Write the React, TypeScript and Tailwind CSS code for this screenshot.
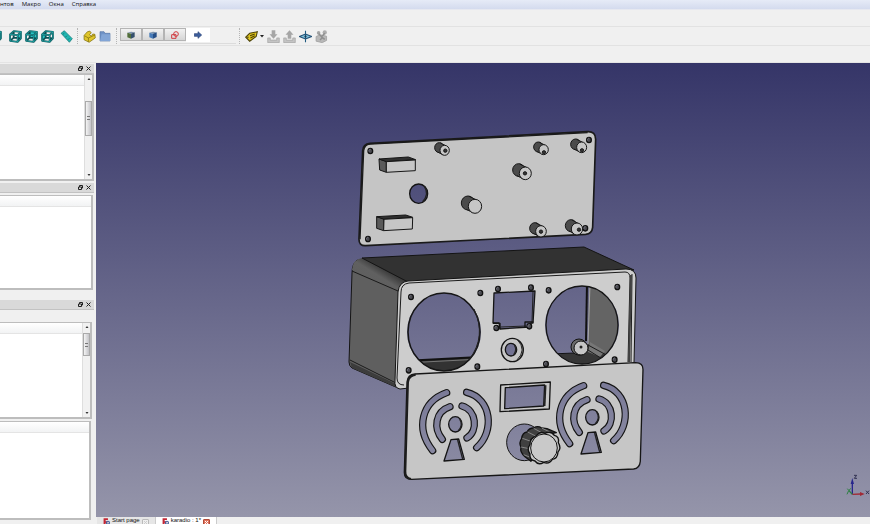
import type { ReactNode } from "react";

const menuItems = ["нтов", "Макро", "Окна", "Справка"];

/** Extruded pin on the back plate: dark side, light cap */
function Pin({ x, y, r, dx, dy, hole }: { x: number; y: number; r: number; dx: number; dy: number; hole?: [number, number] }) {
  return (
    <g stroke="#161616" strokeWidth="3">
      <ellipse cx={x - dx} cy={y - dy} rx={r} ry={r + 1} fill="#4b4b4b" />
      <path
        d={`M${x - dx + 3} ${y - dy - r} L${x + 2} ${y - r} L${x - 4} ${y + r} L${x - dx - 4} ${y - dy + r}Z`}
        fill="#4b4b4b"
        stroke="none"
      />
      <path d={`M${x - dx + 3} ${y - dy - r} L${x + 3} ${y - r} M${x - dx - 5} ${y - dy + r - 1} L${x - 6} ${y + r - 1}`} />
      <ellipse cx={x} cy={y} rx={r} ry={r + 1} fill="#c6c6c6" />
      {hole && <circle cx={hole[0]} cy={hole[1]} r="5" fill="#333" />}
    </g>
  );
}

function Screw({ x, y }: { x: number; y: number }) {
  return (
    <g>
      <ellipse cx={x} cy={y} rx="7" ry="8" fill="#4a4a50" stroke="#111" strokeWidth="4" />
      <path d={`M${x - 4} ${y + 2} A4 5 0 0 1 ${x + 1} ${y - 5}`} stroke="#8c8c9c" strokeWidth="2" fill="none" />
    </g>
  );
}

function Slot({ d }: { d: string }) {
  return (
    <g fill="none" strokeLinecap="round">
      <path d={d} stroke="#141414" strokeWidth="22" />
      <path d={d} stroke="url(#skyFront)" strokeWidth="15" />
    </g>
  );
}

function Grille() {
  return (
    <g>
      <Slot d="M155 98 C80 125 60 205 113 272" />
      <Slot d="M215 97 C290 115 300 215 245 263" />
      <Slot d="M165 140 C120 155 115 205 142 238" />
      <Slot d="M201 138 C245 150 250 213 216 234" />
      <ellipse cx="181" cy="193" rx="20" ry="23" fill="url(#skyFront)" stroke="#141414" strokeWidth="4" />
      <path d="M194 177 Q206 194 190 212" fill="none" stroke="#222" strokeWidth="4" />
      <path d="M168 239 L191 237 L208 298 L147 303Z" fill="url(#skyFront)" stroke="#141414" strokeWidth="4" />
      <path d="M188 240 L203 297" fill="none" stroke="#222" strokeWidth="4" />
    </g>
  );
}

function BackPlate() {
  return (
    <g transform="translate(345 120) scale(.3333)" strokeLinejoin="round">
      <path
        d="M75 70 L728 35 Q752 34 752 58 L743 322 Q741 341 722 343 L62 377 Q41 378 42 356 L53 92 Q54 72 75 70Z"
        fill="#c5c5c5"
        stroke="#1a1a1a"
        strokeWidth="5"
      />
      <path d="M45 358 L56 92 Q58 74 75 72 L728 38" fill="none" stroke="#1a1a1a" strokeWidth="4" />
      <Screw x={76} y={93} />
      <Screw x={732} y={60} />
      <Screw x={69} y={357} />
      <Screw x={721} y={325} />
      <g stroke="#151515" strokeWidth="3">
        <path d="M102 117 L124 124 L124 157 L104 150Z" fill="#5a5a5a" />
        <path d="M102 117 L190 111 L212 119 L124 125Z" fill="#303030" />
        <path d="M124 125 L211 120 L211 152 L124 157Z" fill="#c6c6c6" />
        <path d="M95 290 L117 297 L116 332 L95 325Z" fill="#5a5a5a" />
        <path d="M95 290 L182 285 L203 292 L117 298Z" fill="#303030" />
        <path d="M117 298 L203 293 L202 327 L116 332Z" fill="#c6c6c6" />
      </g>
      <ellipse cx="221" cy="221" rx="27" ry="29" fill="url(#skyBack)" stroke="#141414" strokeWidth="4" />
      <path d="M238 199 Q254 222 233 245" fill="none" stroke="#222" strokeWidth="4" />
      <Pin x={299} y={91} r={14} dx={16} dy={8} hole={[301, 92]} />
      <Pin x={596} y={89} r={14} dx={16} dy={8} hole={[597, 97]} />
      <Pin x={710} y={82} r={15} dx={18} dy={9} hole={[711, 91]} />
      <Pin x={541} y={160} r={18} dx={20} dy={10} hole={[540, 160]} />
      <Pin x={390} y={259} r={20} dx={21} dy={10} />
      <Pin x={588} y={334} r={16} dx={18} dy={9} hole={[588, 335]} />
      <Pin x={696} y={327} r={17} dx={18} dy={10} hole={[702, 329]} />
    </g>
  );
}

function Enclosure() {
  return (
    <g strokeLinejoin="round">
      {/* side and top walls */}
      <path d="M357 260 Q352 264 352 273 L349 362 Q349 366 352 368 L398 388 L404 290 L410 282Z" fill="#5f5f5f" stroke="#141414" />
      <path d="M352 270 Q353 259 362 258 L410 280 Q400 282 398 292Z" fill="url(#edge)" />
      <path d="M362 258 L584 247 L634 270 L408 282Z" fill="#323232" stroke="#141414" />
      <path d="M352 271 L398 291 M350 360 L396 383" stroke="#1a1a1a" fill="none" />
      <path d="M350 362 L396 384 L398 388 L352 368Z" fill="#3c3c3c" />
      {/* front frame */}
      <path
        d="M408 281 L626 269 Q636 269 636 278 L634 363 L400 389 Q394 388 395 380 L398 292 Q399 282 408 281Z"
        fill="#cdcdcd"
        stroke="#141414"
      />
      <path d="M409 283 L625 272 Q630 272 630 278 L628 362 M632 274 L631 362 M409 283 Q401 284 401 292 L397 378 Q397 385 404 385" stroke="#1c1c1c" fill="none" />
      <path d="M631 275 L629 362" stroke="#414141" strokeWidth="2" />
      {/* speaker openings */}
      <clipPath id="leftHole">
        <ellipse cx="444" cy="332" rx="36" ry="39" />
      </clipPath>
      <clipPath id="rightHole">
        <ellipse cx="582" cy="325" rx="36" ry="39" />
      </clipPath>
      <ellipse cx="444" cy="332" rx="37" ry="39" fill="url(#sky)" />
      <g clipPath="url(#leftHole)">
        <path d="M405 361 L482 357 L482 375 L405 375Z" fill="#323232" />
        <path d="M405 361 L482 357" stroke="#111" strokeWidth="2" />
        <path d="M405 363 L482 359" stroke="#777" />
      </g>
      <ellipse cx="444" cy="332" rx="36" ry="39" fill="none" stroke="#151515" strokeWidth="1.5" />
      <path d="M474 309 Q487 336 469 360" fill="none" stroke="#222" />
      <ellipse cx="582" cy="325" rx="37" ry="39" fill="url(#sky)" />
      <g clipPath="url(#rightHole)">
        <path d="M589 284 L622 284 L622 364 L588 345Z" fill="#646464" />
        <path d="M587 284 L586 341" stroke="#111" strokeWidth="2" />
        <path d="M590 284 L588 345" stroke="#a8a8a8" />
        <path d="M550 355 L574 353 L588 344 L608 356 L590 366 L560 368Z" fill="#363636" />
        <path d="M550 354 L575 353" stroke="#111" />
        <path d="M590 342 L605 351 L600 357 L588 352Z" fill="#777" />
        <path d="M588 345 L612 358 M588 350 L604 360" stroke="#1c1c1c" />
        <circle cx="579" cy="347" r="8" fill="#6b6b6b" stroke="#111" />
        <circle cx="581" cy="348" r="7" fill="#c6c6c6" stroke="#111" />
        <circle cx="581" cy="347" r="1.5" fill="#222" />
      </g>
      <ellipse cx="582" cy="325" rx="36" ry="39" fill="none" stroke="#151515" strokeWidth="1.3" />
      {/* display cut-out */}
      <path d="M494 293 L535 291 L533 323 L531 323 L530 327 L500 329 L499 323 L493 323Z" fill="url(#sky)" stroke="#141414" strokeWidth="1.3" />
      <path d="M533 292 L532 322 M501 327 L526 326" stroke="#222" fill="none" />
      <g transform="translate(480 240) scale(.3333)">
        <path d="M39 250 L60 250 L60 268 M135 262 L135 246 L160 246" fill="none" stroke="#141414" strokeWidth="4" />
        <Screw x={54} y={147} />
        <Screw x={153} y={143} />
        <Screw x={206} y={151} />
        <Screw x={412} y={141} />
        <Screw x={49} y={264} />
        <Screw x={148} y={259} />
        <Screw x={198} y={372} />
        <Screw x={404} y={359} />
        <Screw x={1} y={159} />
        <Screw x={-8} y={380} />
        <Screw x={-207} y={171} />
        <Screw x={-214} y={391} />
        <ellipse cx="97" cy="330" rx="33" ry="35" fill="#c6c6c6" stroke="#141414" strokeWidth="4" />
        <path d="M112 299 Q142 330 110 361" fill="none" stroke="#222" strokeWidth="3" />
        <ellipse cx="93" cy="329" rx="17" ry="19" fill="url(#skyBox)" stroke="#141414" strokeWidth="4" />
        <path d="M103 315 Q112 330 101 345" fill="none" stroke="#222" strokeWidth="4" />
      </g>
    </g>
  );
}

function FrontPlate() {
  return (
    <g transform="translate(395 360) scale(.3333)" strokeLinejoin="round">
      <path
        d="M60 42 L722 8 Q745 8 744 30 L736 304 Q734 325 716 327 L50 358 Q27 358 28 336 L36 66 Q38 44 60 42Z"
        fill="#c6c6c6"
        stroke="#161616"
        strokeWidth="4"
      />
      <path d="M48 357 Q30 354 31 334 L39 66 Q42 46 62 44" fill="none" stroke="#1c1c1c" strokeWidth="6" />
      <Grille />
      <g transform="translate(411 -21)">
        <Grille />
      </g>
      {/* display window */}
      <path d="M317 75 L466 66 L463 147 L315 155Z" fill="#c6c6c6" stroke="#141414" strokeWidth="4" />
      <path d="M331 83 L449 75 L446 138 L329 146Z" fill="url(#skyFront)" stroke="#141414" strokeWidth="4" />
      <path d="M452 76 L449 138" stroke="#222" strokeWidth="5" />
      {/* volume knob */}
      <ellipse cx="388" cy="247" rx="53" ry="55" fill="url(#skyFront)" stroke="#141414" strokeWidth="3" />
      <path
        d="M416 204 Q428 196 440 204 L456 206 L484 218 L462 222 L420 230 L402 262 L412 296 L408 304 L390 290 Q374 276 378 262 Q371 248 380 236 Q382 218 396 216 Q402 204 416 204Z"
        fill="#404040"
        stroke="#111"
        strokeWidth="4"
      />
      <path d="M398 216 L422 228 M416 205 L442 219 M440 204 L466 217 M382 235 L408 244 M378 261 L402 266 M386 284 L406 292" stroke="#888" strokeWidth="3" />
      <path
        d="M424 228 Q434 212 450 220 Q468 211 478 226 Q494 230 490 248 Q500 264 489 276 Q488 296 472 298 Q462 314 446 307 Q430 317 420 303 Q402 300 405 282 Q394 268 405 254 Q404 234 424 228Z"
        fill="#c6c6c6"
        stroke="#111"
        strokeWidth="4"
      />
      <ellipse cx="447" cy="264" rx="40" ry="42" fill="#c9c9c9" stroke="#111" strokeWidth="3" />
    </g>
  );
}

function AxisCross() {
  return (
    <g transform="translate(820 460) scale(.3333)">
      <path d="M97 103 L97 66" stroke="#26268c" strokeWidth="4" />
      <path d="M92 72 L97 54 L102 72Z" fill="#26268c" />
      <path d="M97 103 L122 102" stroke="#a02a35" strokeWidth="4" />
      <path d="M120 96 L134 102 L120 108Z" fill="#a02a35" />
      <path d="M97 103 L87 92" stroke="#2b8040" strokeWidth="4" />
      <path d="M102 46 L110 46 L103 55 L111 55" stroke="#303050" strokeWidth="3" fill="none" />
      <path d="M138 92 L147 102 M147 92 L138 102" stroke="#303050" strokeWidth="3" />
      <path d="M82 86 L87 92 L92 85 M86 92 L81 103" stroke="#2b8040" strokeWidth="3" fill="none" />
    </g>
  );
}

// The same background seen from each part's own coordinate system
const skies = [
  { id: "sky", y1: 63, y2: 517 },
  { id: "skyBack", y1: -171, y2: 1191 },
  { id: "skyBox", y1: -531, y2: 831 },
  { id: "skyFront", y1: -891, y2: 471 },
];

function Viewport() {
  return (
    <svg className="min-h-0 w-full flex-1" viewBox="96 63 774 454" preserveAspectRatio="xMidYMid slice" role="img" aria-label="3D">
      <defs>
        {skies.map((sky) => (
          <linearGradient key={sky.id} id={sky.id} gradientUnits="userSpaceOnUse" x1="0" y1={sky.y1} x2="0" y2={sky.y2}>
            <stop offset="0" stopColor="#353568" />
            <stop offset="1" stopColor="#9595aa" />
          </linearGradient>
        ))}
        <linearGradient id="edge" gradientUnits="userSpaceOnUse" x1="384" y1="268" x2="374" y2="284">
          <stop offset="0" stopColor="#383838" />
          <stop offset=".5" stopColor="#606060" />
          <stop offset="1" stopColor="#5f5f5f" />
        </linearGradient>
      </defs>
      <rect x="96" y="63" width="774" height="454" fill="url(#sky)" />
      <BackPlate />
      <Enclosure />
      <FrontPlate />
      <AxisCross />
    </svg>
  );
}

function ToolButton({ label, children }: { label: string; children: ReactNode }) {
  return (
    <button type="button" aria-label={label} className="flex h-4 w-4 shrink-0 items-center justify-center">
      {children}
    </button>
  );
}

function CubeIcon({ face }: { face: string }) {
  return (
    <svg className="h-[13px] w-[13px]" viewBox="0 0 36 36" strokeLinejoin="round">
      <path d={face} fill="#25c4c4" />
      <path d="M3 12 L13 3 L33 5 L33 23 L24 33 L3 30Z M3 12 L24 14 L33 5 M24 14 V33 M13 3 V21 L3 30 M13 21 L33 23" fill="none" stroke="#0c4f54" strokeWidth="5" />
      <path d="M3 12 L13 3 L33 5 L33 23 L24 33 L3 30Z M3 12 L24 14 L33 5 M24 14 V33" fill="none" stroke="#25b5b5" strokeWidth="2" />
    </svg>
  );
}

function SolidCube({ left, right }: { left: string; right: string }) {
  return (
    <svg className="h-2 w-2" viewBox="0 0 24 24">
      <path d="M1 5 L12 2 L23 4 L12 8Z" fill="#7d93ac" />
      <path d="M1 5 L12 8 V23 L1 19Z" fill={left} />
      <path d="M23 4 L12 8 V23 L23 18Z" fill={right} />
    </svg>
  );
}

function Handle() {
  return <div className="mx-[3px] h-4 w-px border-l border-dotted border-[#b5b5b5]" />;
}

function TrayIcon({ up }: { up?: boolean }) {
  return (
    <svg className="h-[13px] w-[13px]" viewBox="0 0 36 36">
      <path d="M2 22 H9 V28 H27 V22 H34 V35 H2Z" fill="#c4c4c4" stroke="#a5a5a5" strokeWidth="2" />
      <path d={up ? "M18 1 L29 13 H23 V24 H13 V13 H7Z" : "M13 1 H23 V12 H29 L18 24 L7 12 H13Z"} fill="#a6a6a6" />
    </svg>
  );
}

function Toolbar() {
  return (
    <div className="mt-4 flex h-5 shrink-0 items-center border-y border-[#e2e2e2]">
      <div className="flex w-[7px] justify-end overflow-hidden pr-1">
        <ToolButton label="Сверху">
          <CubeIcon face="M3 12 L13 3 L33 5 L24 14Z" />
        </ToolButton>
      </div>
      <ToolButton label="Справа">
        <CubeIcon face="M24 14 L33 5 V23 L24 33Z" />
      </ToolButton>
      <ToolButton label="Сзади">
        <CubeIcon face="M13 3 L33 5 V23 L13 21Z" />
      </ToolButton>
      <ToolButton label="Слева">
        <CubeIcon face="M3 12 L13 3 V21 L3 30Z" />
      </ToolButton>
      <div className="w-[3px]" />
      <ToolButton label="Измерить">
        <svg className="h-[13px] w-[13px]" viewBox="0 0 36 36">
          <path d="M3 9 L12 2 L34 24 L26 34Z" fill="#20b5b0" stroke="#0e7777" strokeWidth="2" />
          <path d="M12 9 L8 12 M19 16 L15 20 M26 23 L22 27" stroke="#0d6666" strokeWidth="2" />
        </svg>
      </ToolButton>
      <Handle />
      <ToolButton label="Деталь">
        <svg className="h-[13px] w-[13px]" viewBox="0 0 36 36" strokeLinejoin="round">
          <path d="M3 15 L12 5 L19 3 L23 8 L18 13 L23 17 L27 11 L33 12 L34 22 L17 34 L3 27Z" fill="#dfc52b" stroke="#80700c" strokeWidth="2" />
          <path d="M4 16 L15 22 L33 14 M15 22 V33" fill="none" stroke="#80700c" strokeWidth="2" />
        </svg>
      </ToolButton>
      <ToolButton label="Группа">
        <svg className="h-3 w-3" viewBox="0 0 36 36">
          <path d="M3 5 H15 L18 10 H33 V33 H3Z" fill="#6f93c8" stroke="#5576a8" strokeWidth="2" />
          <path d="M8 13 H33 V33 H3Z" fill="#82a5d6" />
        </svg>
      </ToolButton>
      <Handle />
      <div className="flex h-4 w-29 items-start border-b border-[#dcdcdc]" role="tablist">
        {[0, 1, 2, 3].map((i) => (
          <button
            key={i}
            type="button"
            role="tab"
            aria-selected={i === 3}
            aria-label={`${i + 1}`}
            className={
              i === 3
                ? "flex h-[14px] w-6 items-center justify-center bg-white"
                : "flex h-[13px] w-[22px] items-center justify-center border border-[#b4b4b4] bg-linear-to-b from-[#f2f2f2] to-[#d6d6d6]"
            }
          >
            {i === 0 && <SolidCube left="#526e3a" right="#35506c" />}
            {i === 1 && <SolidCube left="#477bb8" right="#264f87" />}
            {i === 2 && (
              <svg className="h-2 w-2" viewBox="0 0 24 24" fill="none" stroke="#d13a3f" strokeWidth="3">
                <path d="M2 11 H15 V22 H2Z" />
                <circle cx="15" cy="9" r="7" />
              </svg>
            )}
            {i === 3 && (
              <svg className="h-2 w-2" viewBox="0 0 24 24">
                <path d="M1 8 H12 V2 L23 12 L12 22 V16 H1Z" fill="#3d5f9d" stroke="#263f74" strokeWidth="2" />
              </svg>
            )}
          </button>
        ))}
      </div>
      <Handle />
      <ToolButton label="Метка">
        <svg className="h-[13px] w-[13px]" viewBox="0 0 36 36">
          <path d="M2 20 L13 9 L34 5 L31 18 L13 31Z" fill="#e0c51c" stroke="#4c4208" strokeWidth="3" />
          <path d="M14 16 L27 11 M15 22 L27 16" stroke="#4c4208" strokeWidth="3" />
          <circle cx="8" cy="20" r="2" fill="#333" />
        </svg>
      </ToolButton>
      <svg className="mx-px h-1 w-1" viewBox="0 0 8 8">
        <path d="M0 2 H8 L4 7Z" fill="#222" />
      </svg>
      <ToolButton label="Импорт">
        <TrayIcon />
      </ToolButton>
      <ToolButton label="Экспорт">
        <TrayIcon up />
      </ToolButton>
      <ToolButton label="Плоскость">
        <svg className="h-[13px] w-[13px]" viewBox="0 0 36 36">
          <path d="M1 18 L18 11 L35 18 L18 25Z" fill="#7fc3dd" stroke="#244f74" strokeWidth="3" />
          <path d="M18 2 V34" stroke="#1f5b80" strokeWidth="3" />
          <circle cx="18" cy="18" r="3" fill="#1c3450" />
        </svg>
      </ToolButton>
      <ToolButton label="Сборка">
        <svg className="h-[13px] w-[13px]" viewBox="0 0 36 36">
          <path d="M3 18 L14 13 L32 17 V29 L20 35 L3 31Z" fill="#b8b8b8" stroke="#9c9c9c" strokeWidth="2" />
          <circle cx="10" cy="8" r="5" fill="#a5a5a5" />
          <circle cx="27" cy="7" r="6" fill="#adadad" />
          <path d="M10 10 L20 21 M27 9 L17 20 M14 28 L20 21 L27 26" stroke="#8f8f8f" strokeWidth="4" fill="none" />
        </svg>
      </ToolButton>
    </div>
  );
}

function DockTitle() {
  return (
    <div className="flex h-[10px] w-[94px] shrink-0 items-center justify-end gap-[3px] border-b border-[#c2c2c2] bg-[#d9d9d9] pr-[3px]">
      <button type="button" aria-label="Открепить" className="flex">
        <svg className="h-[5px] w-[5px]" viewBox="0 0 10 10" fill="none" stroke="#222" strokeWidth="2">
          <path d="M3 4 V1 H9 V6 H7 M1 4 H7 V9 H1Z" />
        </svg>
      </button>
      <button type="button" aria-label="Закрыть" className="flex">
        <svg className="h-[5px] w-[5px]" viewBox="0 0 10 10" stroke="#222" strokeWidth="2">
          <path d="M1 1 L9 9 M9 1 L1 9" />
        </svg>
      </button>
    </div>
  );
}

function ScrollBar({ thumb }: { thumb: string }) {
  return (
    <div className="relative flex w-2 shrink-0 flex-col items-center justify-between border-l border-[#dedede] bg-[#f1f1f1] py-0.5">
      <svg className="h-1 w-1" viewBox="0 0 8 8">
        <path d="M1 6 L4 2 L7 6Z" fill="#333" />
      </svg>
      <div className={`absolute inset-x-0 flex items-center justify-center border border-[#aaa] bg-linear-to-r from-[#f4f4f4] to-[#c4c4c8] ${thumb}`}>
        <div className="h-1 w-[3px] border-y border-[#777]" />
      </div>
      <svg className="h-1 w-1" viewBox="0 0 8 8">
        <path d="M1 2 L4 6 L7 2Z" fill="#333" />
      </svg>
    </div>
  );
}

function DockBody({ className, children }: { className: string; children?: ReactNode }) {
  return (
    <div className={`flex min-h-0 border-t border-r-2 border-b-2 border-[#bdbdbd] bg-white ${className}`}>
      <div className="flex-1">
        <div className="h-[11px] border-b border-[#e4e4e4] bg-linear-to-b from-white to-[#f2f3f4]" />
      </div>
      {children}
    </div>
  );
}

function Dock() {
  return (
    <aside className="flex w-24 shrink-0 flex-col">
      <div className="h-px" />
      <DockTitle />
      <DockBody className="mr-[2px] grow-[107] basis-0">
        <ScrollBar thumb="top-1/4 h-1/3" />
      </DockBody>
      <div className="h-[2px]" />
      <DockTitle />
      <DockBody className="mt-[2px] mr-[3px] grow-[95] basis-0" />
      <div className="h-[10px]" />
      <DockTitle />
      <div className="h-3" />
      <DockBody className="mr-1 grow-[97] basis-0">
        <ScrollBar thumb="top-[10px] h-1/4" />
      </DockBody>
      <div className="h-[2px]" />
      <DockBody className="mr-[5px] mb-1 grow-[99] basis-0" />
    </aside>
  );
}

function FileTab({ title, active }: { title: string; active?: boolean }) {
  return (
    <div className={`flex items-start gap-[2px] border-r border-[#ccc] px-[6px] ${active ? "bg-white" : "bg-[#e6e6e6]"}`}>
      <svg className="mt-px h-[7px] w-[7px]" viewBox="0 0 24 24">
        <path d="M2 1 H17 V7 H9 V11 H15 V16 H9 V23 H2Z" fill="#c32735" />
        <circle cx="17" cy="16" r="5" fill="none" stroke="#43619c" strokeWidth="4" />
      </svg>
      <button type="button" className="text-[6px] leading-[7px] whitespace-nowrap">
        {title}
      </button>
      <button
        type="button"
        aria-label="Закрыть вкладку"
        className={`mt-[2px] flex h-[7px] w-[7px] items-center justify-center rounded-[1px] border ${active ? "border-[#b04a38] bg-[#e0735c]" : "border-[#bbb] bg-[#efefef]"}`}
      >
        <svg className="h-[5px] w-[5px]" viewBox="0 0 10 10" stroke={active ? "#fff" : "#ccc"} strokeWidth="2">
          <path d="M2 2 L8 8 M8 2 L2 8" />
        </svg>
      </button>
    </div>
  );
}

export default function App() {
  return (
    <div className="flex h-screen flex-col overflow-hidden bg-[#f0f0f0] font-['Liberation_Sans','Noto_Sans',sans-serif] text-[#111]">
      <nav className="flex h-[10px] shrink-0 items-start gap-2 border-b border-[#e6e8f0] bg-linear-to-b from-[#e6ebf7] to-[#d4dbee] font-['Open_Sans','Liberation_Sans',sans-serif] text-[6px] leading-[9px]">
        {menuItems.map((item) => (
          <button key={item} type="button">
            {item}
          </button>
        ))}
      </nav>
      <Toolbar />
      <div className="h-[17px] shrink-0 border-b border-[#e4e4e4]" />
      <main className="flex min-h-0 flex-1">
        <Dock />
        <section className="flex min-w-0 flex-1 flex-col">
          <Viewport />
          <div className="flex h-[7px] shrink-0 overflow-hidden pl-px">
            <FileTab title="Start page" />
            <FileTab title="karadio : 1*" active />
          </div>
        </section>
      </main>
    </div>
  );
}
